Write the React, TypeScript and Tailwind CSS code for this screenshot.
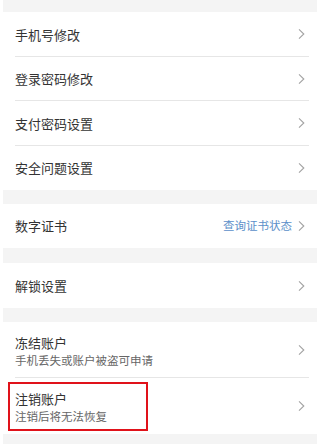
import React from "react";

const font = { fontFamily: '"Noto Sans CJK SC", "Noto Sans", sans-serif' };

function Chevron() {
  return (
    <svg width="7" height="12" viewBox="0 0 7 12" className="shrink-0">
      <path d="M1 1.3 L5.8 6 L1 10.7" fill="none" stroke="#a3a3a3" strokeWidth="1.1" />
    </svg>
  );
}

function Row({ title, right, divider, h }: { title: string; right?: string; divider?: boolean; h: string }) {
  return (
    <div className={`relative flex items-center pl-[15px] pr-[12px] ${h}`}>
      <span className="flex-1 text-[13px] text-[#333]">{title}</span>
      {right && <span className="mr-[6px] text-[11.5px] text-[#5b8fc9]">{right}</span>}
      <Chevron />
      {divider && <div className="absolute bottom-0 left-[15px] right-[8px] h-px bg-[#e6e6e6]" />}
    </div>
  );
}

function Row2({ title, sub, divider, boxed }: { title: string; sub: string; divider?: boolean; boxed?: boolean }) {
  return (
    <div className="relative flex h-[56px] items-center pl-[15px] pr-[12px]">
      <div className="flex flex-1 flex-col self-start pt-[12px]">
        <span className="text-[13px] text-[#333] leading-[18px]">{title}</span>
        <span className="text-[11.5px] text-[#666] leading-[17px]">{sub}</span>
      </div>
      <Chevron />
      {divider && <div className="absolute bottom-0 left-[15px] right-[8px] h-px bg-[#e6e6e6]" />}
      {boxed && (
        <div className="absolute left-[8px] top-[4px] h-[49px] w-[140px] border-[2.5px] border-[#e0121a]" />
      )}
    </div>
  );
}

function Gap({ h }: { h: string }) {
  return <div className={`ml-[3px] bg-[#f4f4f4] ${h}`} />;
}

export default function App() {
  return (
    <div className="h-[444px] w-[317px] overflow-hidden bg-white" style={font}>
      <Gap h="h-[12px]" />
      <Row title="手机号修改" divider h="h-[44.5px]" />
      <Row title="登录密码修改" divider h="h-[44.5px]" />
      <Row title="支付密码设置" divider h="h-[44.5px]" />
      <Row title="安全问题设置" h="h-[44.5px]" />
      <Gap h="h-[14px]" />
      <Row title="数字证书" right="查询证书状态" h="h-[44px]" />
      <Gap h="h-[15px]" />
      <Row title="解锁设置" h="h-[45px]" />
      <Gap h="h-[14px]" />
      <Row2 title="冻结账户" sub="手机丢失或账户被盗可申请" divider />
      <Row2 title="注销账户" sub="注销后将无法恢复" boxed />
      <Gap h="h-[20px]" />
    </div>
  );
}
